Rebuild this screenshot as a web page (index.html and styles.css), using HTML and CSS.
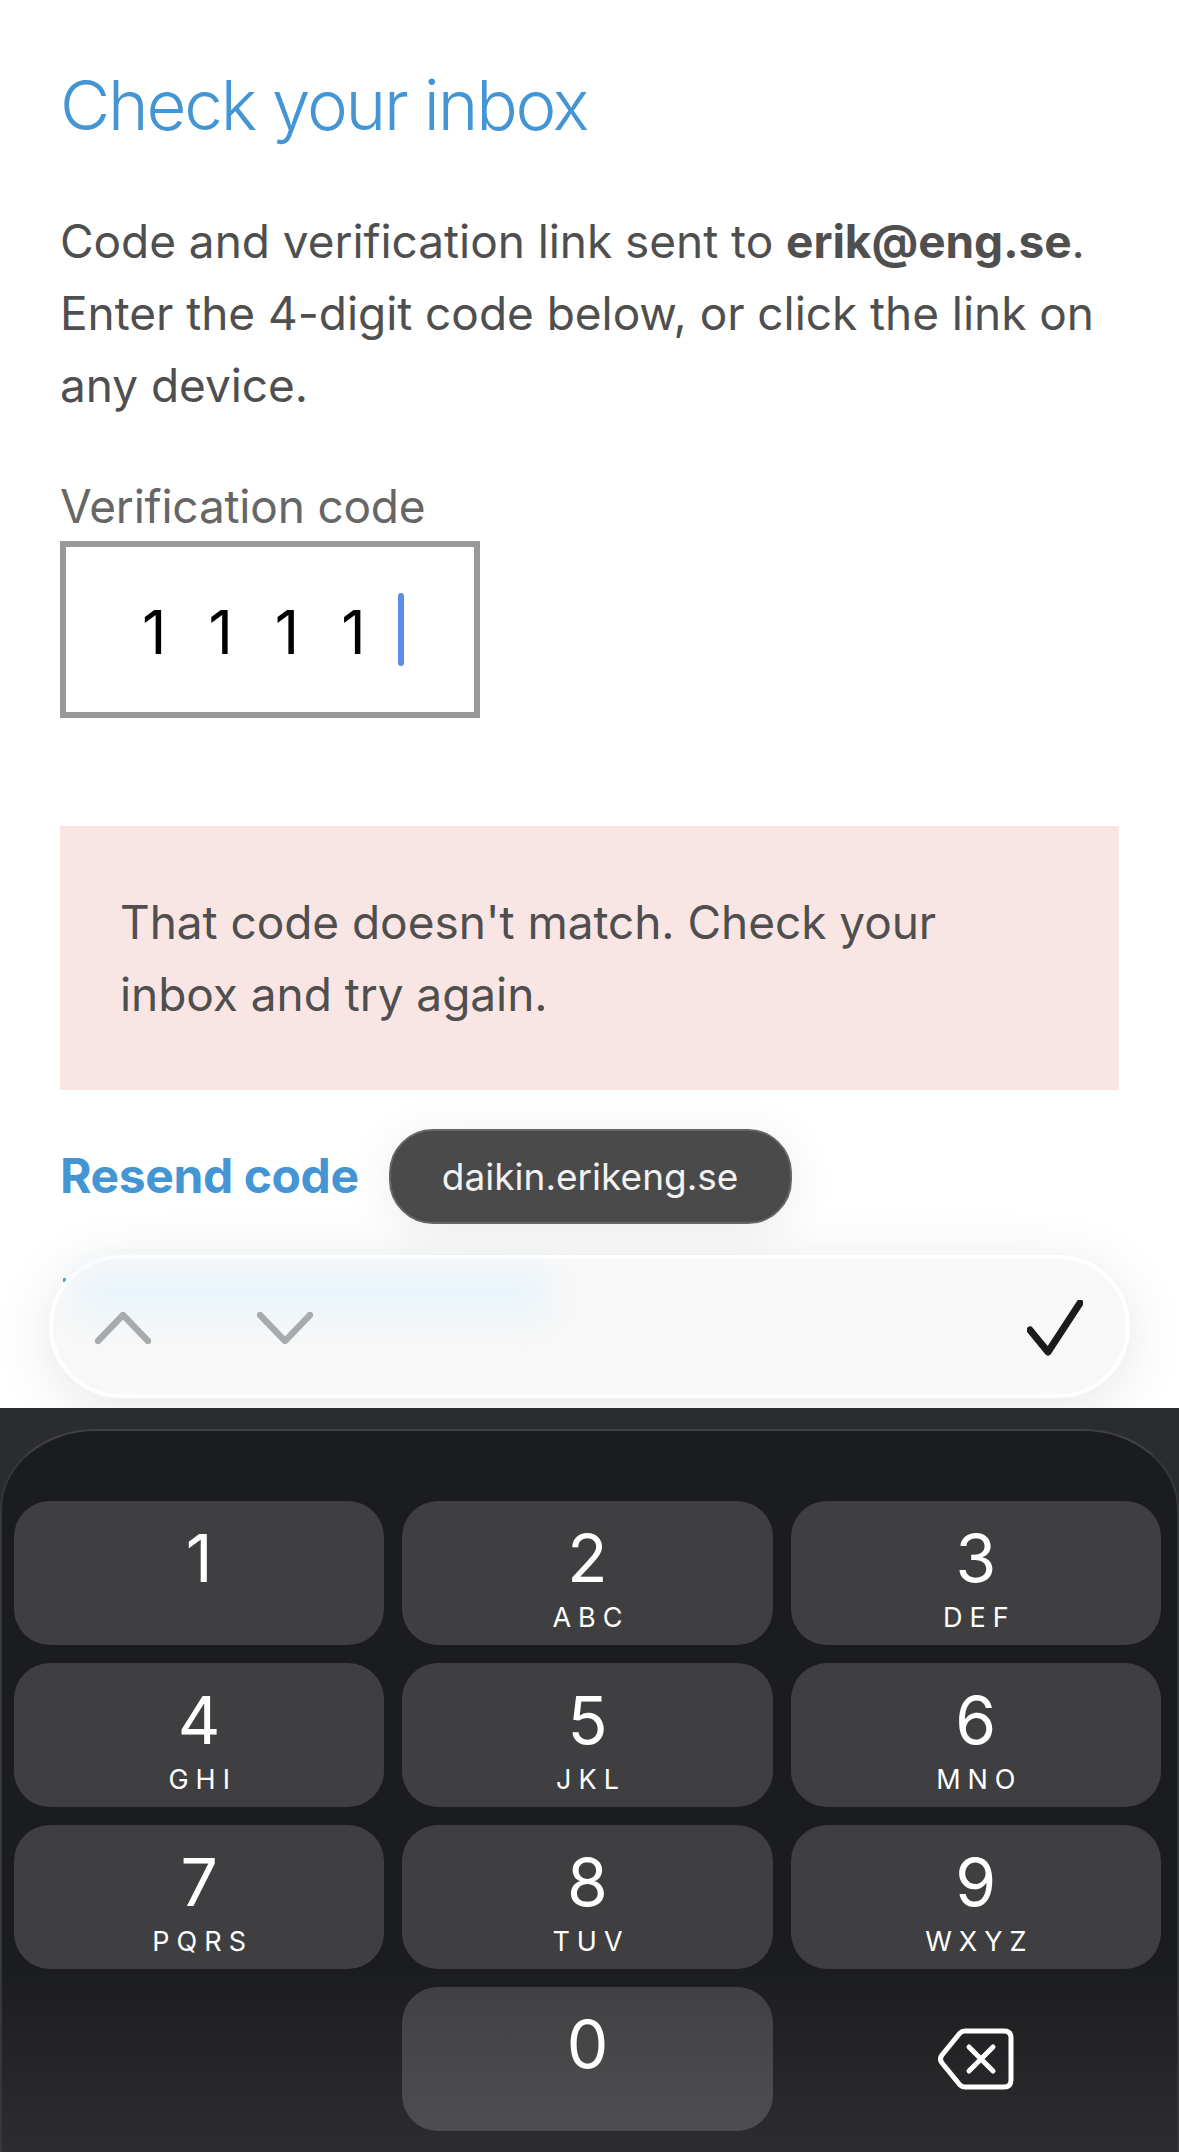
FILE: index.html
```html
<!DOCTYPE html>
<html lang="en">
<head>
    <meta charset="UTF-8">
    <meta name="viewport" content="width=device-width, initial-scale=1.0">
    <title>Check your inbox</title>
    <link rel="stylesheet" href="styles.css">
</head>
<body>

<div class="screen">
    <main class="page">
        <h1 class="title">Check your inbox</h1>
        <p class="intro">Code and verification link sent to <strong>erik@eng.se</strong>. Enter the 4-digit code below, or click the link on any device.</p>

        <label class="code-label">Verification code</label>
        <div class="code-input">
            <span class="code-digits">1111</span>
            <span class="caret"></span>
        </div>

        <div class="error-box">That code doesn't match. Check your inbox and try again.</div>

        <div class="resend-row">
            <a class="resend-link">Resend code</a>
            <div class="url-pill">daikin.erikeng.se</div>
        </div>
    </main>

    <!-- form toolbar floats above the page, the speck is a link peeking out behind it -->
    <div class="speck"></div>
    <div class="toolbar">
        <div class="toolbar-glow"></div>
        <svg class="tool-icon" width="56" height="32" viewBox="0 0 56 32">
            <path d="M3 29 L28 3 L53 29" fill="none" stroke="#a8abad" stroke-width="6.5" stroke-linecap="round" stroke-linejoin="round"/>
        </svg>
        <svg class="tool-icon tool-next" width="56" height="32" viewBox="0 0 56 32">
            <path d="M3 3 L28 29 L53 3" fill="none" stroke="#a8abad" stroke-width="6.5" stroke-linecap="round" stroke-linejoin="round"/>
        </svg>
        <svg class="tool-done" width="56" height="56" viewBox="0 0 56 56">
            <path d="M3 30 L21 52 L53 3" fill="none" stroke="#1c1c1e" stroke-width="7" stroke-linecap="round" stroke-linejoin="round"/>
        </svg>
    </div>

    <div class="keyboard">
        <div class="keypad">
            <div class="key"><span class="num">1</span></div>
            <div class="key"><span class="num">2</span><span class="letters">ABC</span></div>
            <div class="key"><span class="num">3</span><span class="letters">DEF</span></div>
            <div class="key"><span class="num">4</span><span class="letters">GHI</span></div>
            <div class="key"><span class="num">5</span><span class="letters">JKL</span></div>
            <div class="key"><span class="num">6</span><span class="letters">MNO</span></div>
            <div class="key"><span class="num">7</span><span class="letters">PQRS</span></div>
            <div class="key"><span class="num">8</span><span class="letters">TUV</span></div>
            <div class="key"><span class="num">9</span><span class="letters">WXYZ</span></div>
            <div class="key key-empty"></div>
            <div class="key key-zero"><span class="num">0</span></div>
            <div class="key key-empty key-delete">
                <svg width="76" height="62" viewBox="0 0 76 62">
                    <path d="M27 3 H66 Q73 3 73 10 V52 Q73 59 66 59 H27 Q24 59 22 57 L4 35 Q1 31 4 27 L22 5 Q24 3 27 3 Z" fill="none" stroke="#fff" stroke-width="5" stroke-linejoin="round"/>
                    <path d="M31 19 L55 43 M55 19 L31 43" fill="none" stroke="#fff" stroke-width="5" stroke-linecap="round"/>
                </svg>
            </div>
        </div>
    </div>
</div>

</body>
</html>
```

FILE: styles.css
```css
* {
    box-sizing: border-box;
}
body {
    margin: 0;
    background: #fff;
    font-family: Inter, "Liberation Sans", sans-serif;
}
.screen {
    position: relative;
    height: 2152px;
    display: flex;
    flex-direction: column;
    overflow: hidden;
}
.page {
    flex: 1;
    padding: 60px 60px 0;
    color: #4f4f4f;
}
.title {
    margin: 0 0 55px;
    font-size: 69px;
    line-height: 90px;
    font-weight: 300;
    letter-spacing: -2.2px;
    color: #4495d4;
}
.intro {
    margin: 0 0 55px;
    font-size: 46px;
    line-height: 72px;
    letter-spacing: -0.05px;
}
.intro strong {
    font-weight: 700;
}
.code-label {
    display: block;
    font-size: 46px;
    line-height: 60px;
    letter-spacing: -0.2px;
    color: #666;
}
.code-input {
    display: flex;
    align-items: center;
    width: 420px;
    height: 177px;
    margin-top: 5px;
    padding-left: 76px;
    border: 6px solid #999;
}
.code-digits {
    padding-top: 5px;
    font-size: 60px;
    font-weight: 400;
    letter-spacing: 42px;
    color: #000;
    margin-right: -10px;
}
.caret {
    width: 6px;
    height: 73px;
    border-radius: 3px;
    background: #5b8dea;
}
.error-box {
    margin-top: 108px;
    padding: 60px;
    height: 264px;
    background: #f9e5e4;
    font-size: 46px;
    line-height: 72px;
    letter-spacing: -0.05px;
}
.resend-row {
    display: flex;
    align-items: center;
    gap: 30px;
    margin-top: 39px;
}
.resend-link {
    padding-bottom: 2px;
    font-size: 48px;
    font-weight: 700;
    letter-spacing: -0.4px;
    color: #4495d4;
}
.url-pill {
    width: 403px;
    height: 95px;
    border: 2px solid #666;
    border-radius: 44px;
    background: #4a4a4a;
    box-shadow: 0 8px 50px rgba(0, 0, 0, 0.08);
    color: #f2f2f2;
    font-size: 37px;
    line-height: 91px;
    text-align: center;
}
.speck {
    position: absolute;
    left: 63px;
    top: 1278px;
    width: 3px;
    height: 4px;
    background: #4a9bc4;
}
.toolbar {
    position: absolute;
    left: 49px;
    top: 1255px;
    width: 1081px;
    height: 143px;
    display: flex;
    align-items: center;
    padding-left: 42px;
    border: 4px solid #fff;
    border-radius: 72px;
    background: #f8f8f8;
    box-shadow: 0 10px 60px rgba(0, 0, 0, 0.1);
}
.toolbar-glow {
    position: absolute;
    left: 24px;
    top: 14px;
    width: 470px;
    height: 40px;
    background: #e6f3fb;
    filter: blur(18px);
}
.tool-icon {
    position: relative;
    margin-top: 3px;
}
.tool-next {
    margin-left: 106px;
}
.tool-done {
    margin-left: auto;
    margin-right: 43px;
    margin-top: 2px;
}
.keyboard {
    position: relative;
    height: 744px;
    padding-top: 21px;
    background: #2b2c2f;
}
.keypad {
    height: 100%;
    display: grid;
    grid-template-columns: repeat(3, 1fr);
    grid-auto-rows: 144px;
    gap: 18px;
    padding: 70px 16px 0 12px;
    border: 2px solid #36373b;
    border-top-color: #404145;
    border-bottom: none;
    border-radius: 96px 96px 0 0 / 80px 80px 0 0;
    background: linear-gradient(to bottom, #1b1c1e 74%, #2d2d2f 100%);
}
.key {
    display: flex;
    flex-direction: column;
    align-items: center;
    padding-top: 21px;
    border-radius: 36px;
    background: #3f3f41;
    color: #fff;
}
.key-zero {
    background: linear-gradient(to bottom, #414143, #4e4e50);
}
.key-empty {
    background: none;
}
.key-delete {
    justify-content: center;
    padding-top: 0;
}
.num {
    font-size: 66px;
    line-height: 72px;
    font-weight: 400;
}
.letters {
    font-size: 27px;
    line-height: 30px;
    margin-top: 9px;
    font-weight: 400;
    letter-spacing: 7px;
    margin-right: -7px;
}
```
